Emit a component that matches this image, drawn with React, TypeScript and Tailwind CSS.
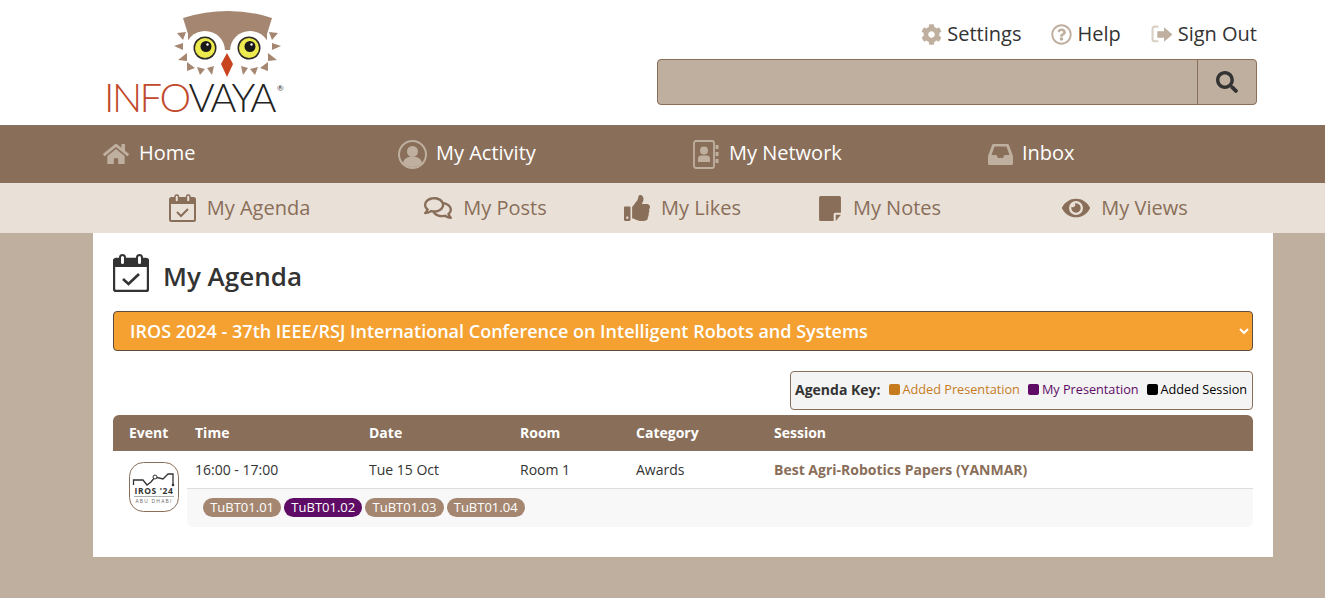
import { FaCog, FaHome, FaRegComments, FaThumbsUp, FaEye, FaSearch, FaRegQuestionCircle } from "react-icons/fa"
import type { ReactNode } from "react"

const feathers = [
  "177,33 186,32 183,40",
  "174,46 183,43 183,50",
  "178,60 187,53 187,61",
  "187,62 195,68 187,71",
  "197,67 205,69 200,75",
  "207,68 214,66 212,75",
]

function Owl() {
  return (
    <svg viewBox="170 8 115 72" className="w-[115px] h-[72px] block">
      <path d="M183 18 Q205 11 228 11 Q251 11 272 18 L267 34 L267 50 L188 50 L188 34 Z" fill="#a58771" />
      <circle cx="205" cy="51" r="20" fill="#fff" />
      <circle cx="250" cy="51" r="20" fill="#fff" />
      {feathers.map((p) => (
        <polygon key={p} points={p} fill="#a58771" />
      ))}
      <g transform="matrix(-1 0 0 1 455 0)">
        {feathers.map((p) => (
          <polygon key={p} points={p} fill="#a58771" />
        ))}
      </g>
      {[205, 249].map((cx) => (
        <g key={cx}>
          <circle cx={cx} cy="48" r="11.5" fill="#2c2a26" />
          <circle cx={cx} cy="48" r="10" fill="#ecea4e" />
          <circle cx={cx + 1} cy="46.5" r="5.5" fill="#1b1a18" />
          <circle cx={cx + 2.5} cy="44.5" r="1.2" fill="#fff" />
        </g>
      ))}
      <polygon points="227,53 233,64 227,77 221,64" fill="#c8441f" />
    </svg>
  )
}

function CalendarCheck({ className }: { className?: string }) {
  return (
    <svg viewBox="0 0 36 38" className={className} fill="none">
      <path d="M3 5h30a2 2 0 0 1 2 2v28a2 2 0 0 1-2 2H3a2 2 0 0 1-2-2V7a2 2 0 0 1 2-2z" stroke="currentColor" strokeWidth="2.4" />
      <path d="M1 5h34v8H1z" fill="currentColor" />
      <rect x="7" y="1" width="5" height="10" rx="2.5" fill="#fff" stroke="currentColor" strokeWidth="2" />
      <rect x="24" y="1" width="5" height="10" rx="2.5" fill="#fff" stroke="currentColor" strokeWidth="2" />
      <path d="M10 25l5.500 5L26 20" stroke="currentColor" strokeWidth="2.6" />
    </svg>
  )
}

function NavCalendar({ className }: { className?: string }) {
  return (
    <svg viewBox="0 0 27 28" className={className} fill="none">
      <rect x="1" y="4" width="25" height="23" rx="1.500" stroke="currentColor" strokeWidth="2" />
      <path d="M1 4h25v6H1z" fill="currentColor" />
      <rect x="6" y="1" width="3.500" height="7" rx="1.700" fill="#e9e0d7" stroke="currentColor" strokeWidth="1.500" />
      <rect x="17.500" y="1" width="3.500" height="7" rx="1.700" fill="#e9e0d7" stroke="currentColor" strokeWidth="1.500" />
      <path d="M8 18l4 4 7-7" stroke="currentColor" strokeWidth="2" />
    </svg>
  )
}

function UserCircle() {
  return (
    <svg viewBox="0 0 29 29" className="w-[29px] h-[29px]">
      <circle cx="14.500" cy="14.500" r="13.500" fill="none" stroke="#bfaf9f" strokeWidth="2" />
      <circle cx="14.500" cy="11.500" r="5.500" fill="#bfaf9f" />
      <path d="M5 23c1-4.500 4-5.500 6-6h7c2 .5 5 1.500 6 6-2.500 2.500-6 4-9.500 4S7.500 25.500 5 23z" fill="#bfaf9f" />
    </svg>
  )
}

function AddressBook() {
  return (
    <svg viewBox="0 0 26 29" className="w-[26px] h-[29px]">
      <rect x="1" y="1" width="20" height="27" rx="2" fill="none" stroke="#bfaf9f" strokeWidth="1.800" />
      <circle cx="11" cy="10.500" r="4" fill="#bfaf9f" />
      <path d="M5 22v-3.500c0-2 1.500-3 3-3h6c1.500 0 3 1 3 3V22z" fill="#bfaf9f" />
      <path d="M22.500 5h3v4h-3zM22.500 12h3v4h-3zM22.500 19h3v4h-3z" fill="#bfaf9f" />
    </svg>
  )
}

function Tray() {
  return (
    <svg viewBox="0 0 25 21" className="w-[25px] h-[21px]">
      <path d="M5.500 0h14a1.500 1.500 0 0 1 1.400 1L25 12v7.500a1.500 1.500 0 0 1-1.500 1.500h-22A1.500 1.500 0 0 1 0 19.500V12L4.100 1a1.500 1.500 0 0 1 1.400-1z" fill="#bfaf9f" />
      <path d="M6.500 2.500h12l3 8.500h-5l-1.500 3h-5l-1.500-3h-5z" fill="#896e59" />
    </svg>
  )
}

function SignOut() {
  return (
    <svg viewBox="0 0 21 18" className="w-[22px] h-[19px]">
      <path d="M7 1.500H3.500A2 2 0 0 0 1.500 3.500v10a2 2 0 0 0 2 2H7" fill="none" stroke="#d9cfc4" strokeWidth="2" />
      <path d="M6 6h6.500V2l8 7-8 7v-4H6z" fill="#bfaf9f" />
    </svg>
  )
}

function Note() {
  return (
    <svg viewBox="0 0 21 24" className="w-[24px] h-[25px]">
      <path d="M1.500 0h18A1.500 1.500 0 0 1 21 1.500V16h-5.500a1.500 1.500 0 0 0-1.500 1.500V24H1.500A1.500 1.500 0 0 1 0 22.500v-21A1.500 1.500 0 0 1 1.500 0z" fill="#896e59" />
      <path d="M16 18h5l-5 6z" fill="#896e59" />
    </svg>
  )
}

function IrosLogo() {
  return (
    <svg viewBox="0 0 50 50" className="w-[50px] h-[50px]">
      <rect x="0.500" y="0.500" width="49" height="49" rx="14" fill="#fff" stroke="#896e59" />
      <path d="M4.500 23v-5H14l4 5 4-3 4-5 8 2 5-5h5v11" fill="none" stroke="#333" strokeWidth="1.300" />
      <circle cx="26" cy="15" r="2" fill="#fff" stroke="#333" />
      <circle cx="44" cy="23" r="1.300" fill="#333" />
      <text x="25" y="32" textAnchor="middle" fontSize="8.500" fontWeight="700" letterSpacing="0.600" fill="#333" fontFamily="'Open Sans', sans-serif">IROS '24</text>
      <path d="M5 34.500h40" stroke="#999" strokeWidth="0.800" />
      <text x="25" y="40.500" textAnchor="middle" fontSize="5" letterSpacing="1.200" fill="#666" fontFamily="'Open Sans', sans-serif">ABU DHABI</text>
    </svg>
  )
}

function TopLink({ icon, label }: { icon: ReactNode; label: string }) {
  return (
    <a className="flex items-center gap-[5px] text-[20px] leading-[28px] text-[#333]">
      {icon}
      <span>{label}</span>
    </a>
  )
}

function MainNav({ icon, label, gap }: { icon: ReactNode; label: string; gap: string }) {
  return (
    <a className={`flex items-center pl-[10px] text-[20px] text-white ${gap}`}>
      {icon}
      <span className="pb-[2px]">{label}</span>
    </a>
  )
}

function SubNav({ icon, label }: { icon: ReactNode; label: string }) {
  return (
    <a className="flex items-center justify-center gap-[11px] pr-[2px] text-[20px] text-[#896e59]">
      {icon}
      <span>{label}</span>
    </a>
  )
}

const badges = [
  { code: "TuBT01.01", mine: false },
  { code: "TuBT01.02", mine: true },
  { code: "TuBT01.03", mine: false },
  { code: "TuBT01.04", mine: false },
]

export default function App() {
  return (
    <div className="min-h-[598px] bg-[#bfaf9f] font-['Open_Sans',sans-serif] text-[#333]">
      {/* Header */}
      <header className="h-[125px] bg-white flex justify-between pl-[107px] pr-[68px]">
        <div className="w-[177px] pt-[8px]">
          <div className="pl-[63px]">
            <Owl />
          </div>
          <div className="-ml-[3px] -mt-[3px] flex items-start h-[40px] font-['Lato',sans-serif] font-light text-[40px] leading-[40px] tracking-[-2.5px] whitespace-nowrap">
            <span className="text-[#c0492b]">INFO</span>
            <span className="text-[#222]">VAYA</span>
            <span className="text-[8px] leading-[10px] mt-[6px] ml-[3px] tracking-normal font-normal text-[#333]">®</span>
          </div>
        </div>
        <div className="w-[600px] pt-[20px]">
          <div className="flex justify-end gap-[30px]">
            <TopLink icon={<FaCog className="text-[#bfaf9f] text-[21px]" />} label="Settings" />
            <TopLink icon={<FaRegQuestionCircle className="text-[#bfaf9f] text-[21px]" />} label="Help" />
            <TopLink icon={<SignOut />} label="Sign Out" />
          </div>
          <div className="mt-[11px] h-[46px] flex rounded-[4px] border border-[#896e59] bg-[#bfaf9f]">
            <div className="flex-1" />
            <div className="w-[59px] border-l border-[#896e59] flex items-center justify-center">
              <FaSearch className="text-[#333] text-[22px]" />
            </div>
          </div>
        </div>
      </header>

      {/* Main nav */}
      <nav className="h-[58px] bg-[#896e59]">
        <div className="ml-[93px] w-[1180px] h-full grid grid-cols-4">
          <MainNav gap="gap-[10px]" icon={<FaHome className="text-[#bfaf9f] text-[26px]" />} label="Home" />
          <MainNav gap="gap-[9px]" icon={<UserCircle />} label="My Activity" />
          <MainNav gap="gap-[10px]" icon={<AddressBook />} label="My Network" />
          <MainNav gap="gap-[9px]" icon={<Tray />} label="Inbox" />
        </div>
      </nav>

      {/* Sub nav */}
      <nav className="h-[50px] bg-[#e9e0d7]">
        <div className="ml-[93px] w-[1180px] h-full grid grid-cols-[295px_197px_197px_197px_294px]">
          <SubNav icon={<NavCalendar className="w-[27px] h-[28px]" />} label="My Agenda" />
          <SubNav icon={<FaRegComments className="text-[28px]" />} label="My Posts" />
          <SubNav icon={<FaThumbsUp className="text-[26px]" />} label="My Likes" />
          <SubNav icon={<Note />} label="My Notes" />
          <SubNav icon={<FaEye className="text-[28px]" />} label="My Views" />
        </div>
      </nav>

      {/* Content */}
      <main className="ml-[93px] w-[1180px] h-[324px] bg-white px-[20px] pt-[20px]">
        <div className="flex items-center gap-[14px] h-[40px]">
          <CalendarCheck className="w-[36px] h-[38px] text-[#333]" />
          <h1 className="mt-[6px] text-[26px] font-semibold leading-[40px]">My Agenda</h1>
        </div>

        <select className="mt-[18px] w-full h-[40px] rounded-[4px] border border-[#5f4c3d] bg-[#f4a131] pl-[12px] text-[18px] font-semibold text-white">
          <option>IROS 2024 - 37th IEEE/RSJ International Conference on Intelligent Robots and Systems</option>
        </select>

        <div className="mt-[20px] flex justify-end">
          <div className="h-[39px] w-[463px] flex items-center gap-[8px] rounded-[4px] border border-[#896e59] bg-[#f4f4f4] pl-[4px] pb-[2px] text-[12.7px]">
            <b className="text-[14px] font-bold">Agenda Key:</b>
            <span className="flex items-center gap-[3px] text-[#c67c1e]">
              <i className="w-[11px] h-[11px] rounded-[2px] bg-[#c67c1e]" />
              Added Presentation
            </span>
            <span className="flex items-center gap-[3px] text-[#5e0c66]">
              <i className="w-[11px] h-[11px] rounded-[2px] bg-[#5e0c66]" />
              My Presentation
            </span>
            <span className="flex items-center gap-[3px] text-black">
              <i className="w-[11px] h-[11px] rounded-[2px] bg-black" />
              Added Session
            </span>
          </div>
        </div>

        <div className="mt-[5px]">
          <div className="h-[36px] pb-[2px] rounded-t-[6px] bg-[#896e59] grid grid-cols-[82px_174px_151px_116px_138px_1fr] items-center text-[14px] font-bold text-white">
            <span className="pl-[16px]">Event</span>
            <span>Time</span>
            <span>Date</span>
            <span>Room</span>
            <span>Category</span>
            <span>Session</span>
          </div>
          <div className="flex">
            <div className="w-[74px] pl-[16px] pt-[11px]">
              <IrosLogo />
            </div>
            <div className="flex-1">
              <div className="h-[38px] border-b border-[#ddd] pl-[8px] grid grid-cols-[174px_151px_116px_138px_1fr] items-center text-[14px]">
                <span>16:00 - 17:00</span>
                <span>Tue 15 Oct</span>
                <span>Room 1</span>
                <span>Awards</span>
                <span className="font-bold text-[#896e59]">Best Agri-Robotics Papers (YANMAR)</span>
              </div>
              <div className="h-[38px] rounded-b-[6px] bg-[#f8f8f8] pl-[16px] pt-[9px] flex items-start gap-[3px]">
                {badges.map((b) => (
                  <span
                    key={b.code}
                    className={`h-[19px] w-[78.2px] rounded-full text-center text-[13px] leading-[19px] text-white ${b.mine ? "bg-[#5e0c66]" : "bg-[#a58771]"}`}
                  >
                    {b.code}
                  </span>
                ))}
              </div>
            </div>
          </div>
        </div>
      </main>
    </div>
  )
}
